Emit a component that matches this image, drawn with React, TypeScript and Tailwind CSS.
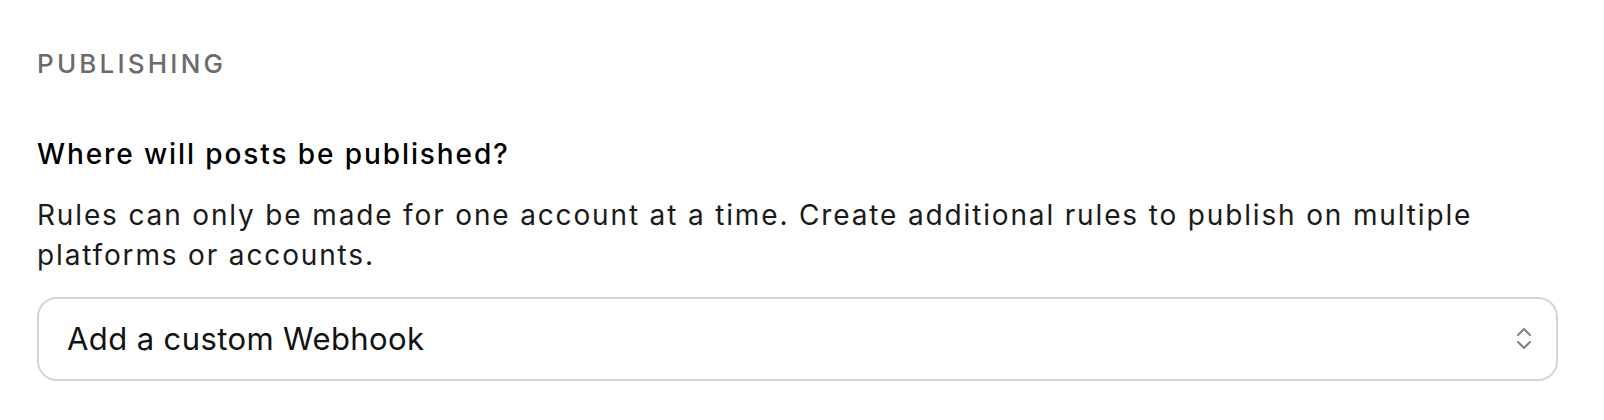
function UpDownIcon() {
  return (
    <svg
      width="16"
      height="23"
      viewBox="0 0 16 23"
      fill="none"
      stroke="currentColor"
      strokeWidth="2"
      strokeLinecap="round"
      strokeLinejoin="round"
      className="text-[#7b8089] shrink-0 -mt-[2px]"
    >
      <polyline points="2,8 8,2 14,8" />
      <polyline points="2,15 8,21 14,15" />
    </svg>
  );
}

export default function App() {
  return (
    <div className="min-h-screen bg-white font-['Inter',sans-serif] text-[#111111]">
      <section className="pl-[37px] pt-[46px] w-[1558px]">
        <h2 className="text-[26px] leading-[36px] font-medium tracking-[3.2px] text-[#6b6b6b] uppercase">
          Publishing
        </h2>

        <div className="mt-[52px]">
          <h3 className="text-[28px] leading-[40px] font-medium tracking-[1.9px] text-black">
            Where will posts be published?
          </h3>
          <p className="mt-[21px] text-[28px] leading-[40px] tracking-[1.85px] text-[#1a1a1a]">
            Rules can only be made for one account at a time. Create additional rules to publish on multiple
            platforms or accounts.
          </p>

          <button
            type="button"
            className="mt-[22px] flex h-[84px] w-full items-center justify-between rounded-[20px] border-2 border-[#d2d5da] bg-white pl-[28px] pr-[24px] text-left"
          >
            <span className="text-[31px] leading-[40px] tracking-[0.4px] text-[#111111]">Add a custom Webhook</span>
            <UpDownIcon />
          </button>
        </div>
      </section>
    </div>
  );
}
